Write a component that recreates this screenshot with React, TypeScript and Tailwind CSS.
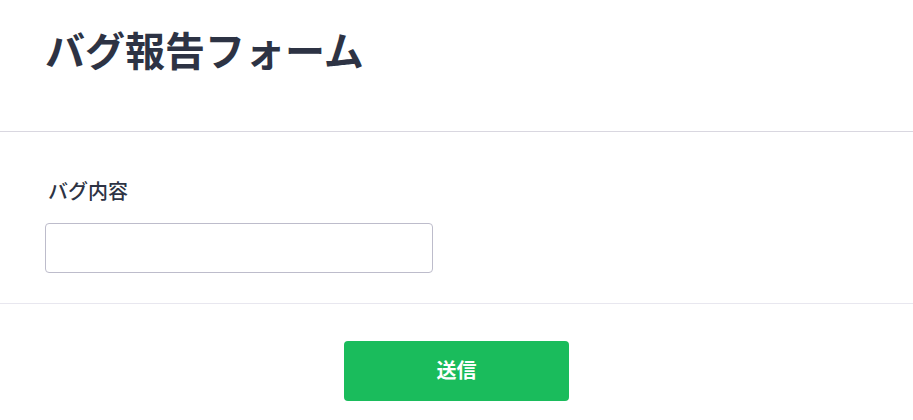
export default function App() {
  const font = { fontFamily: '"Noto Sans", "Noto Sans CJK JP", sans-serif' };
  return (
    <div className="w-[913px] h-[420px] bg-white overflow-hidden" style={font}>
      <div className="h-[132px] border-b border-[#d9d7e0] px-[45px] pt-[25px]">
        <h1 className="text-[40px] leading-[52px] font-bold text-[#2d3344]">バグ報告フォーム</h1>
      </div>
      <div className="h-[172px] border-b border-[#e8e7ef] px-[45px] pt-[46px]">
        <label className="block text-[20px] leading-[28px] font-medium text-[#2d3344] pl-[3px]">バグ内容</label>
        <input className="mt-[17px] block w-[388px] h-[50px] rounded-[4px] border border-[#bdbccb] bg-white px-3 outline-none" />
      </div>
      <div className="flex justify-center pt-[37px]">
        <button className="w-[225px] h-[60px] rounded-[4px] bg-[#1abc5c] text-white text-[20px] font-bold">
          送信
        </button>
      </div>
    </div>
  );
}
